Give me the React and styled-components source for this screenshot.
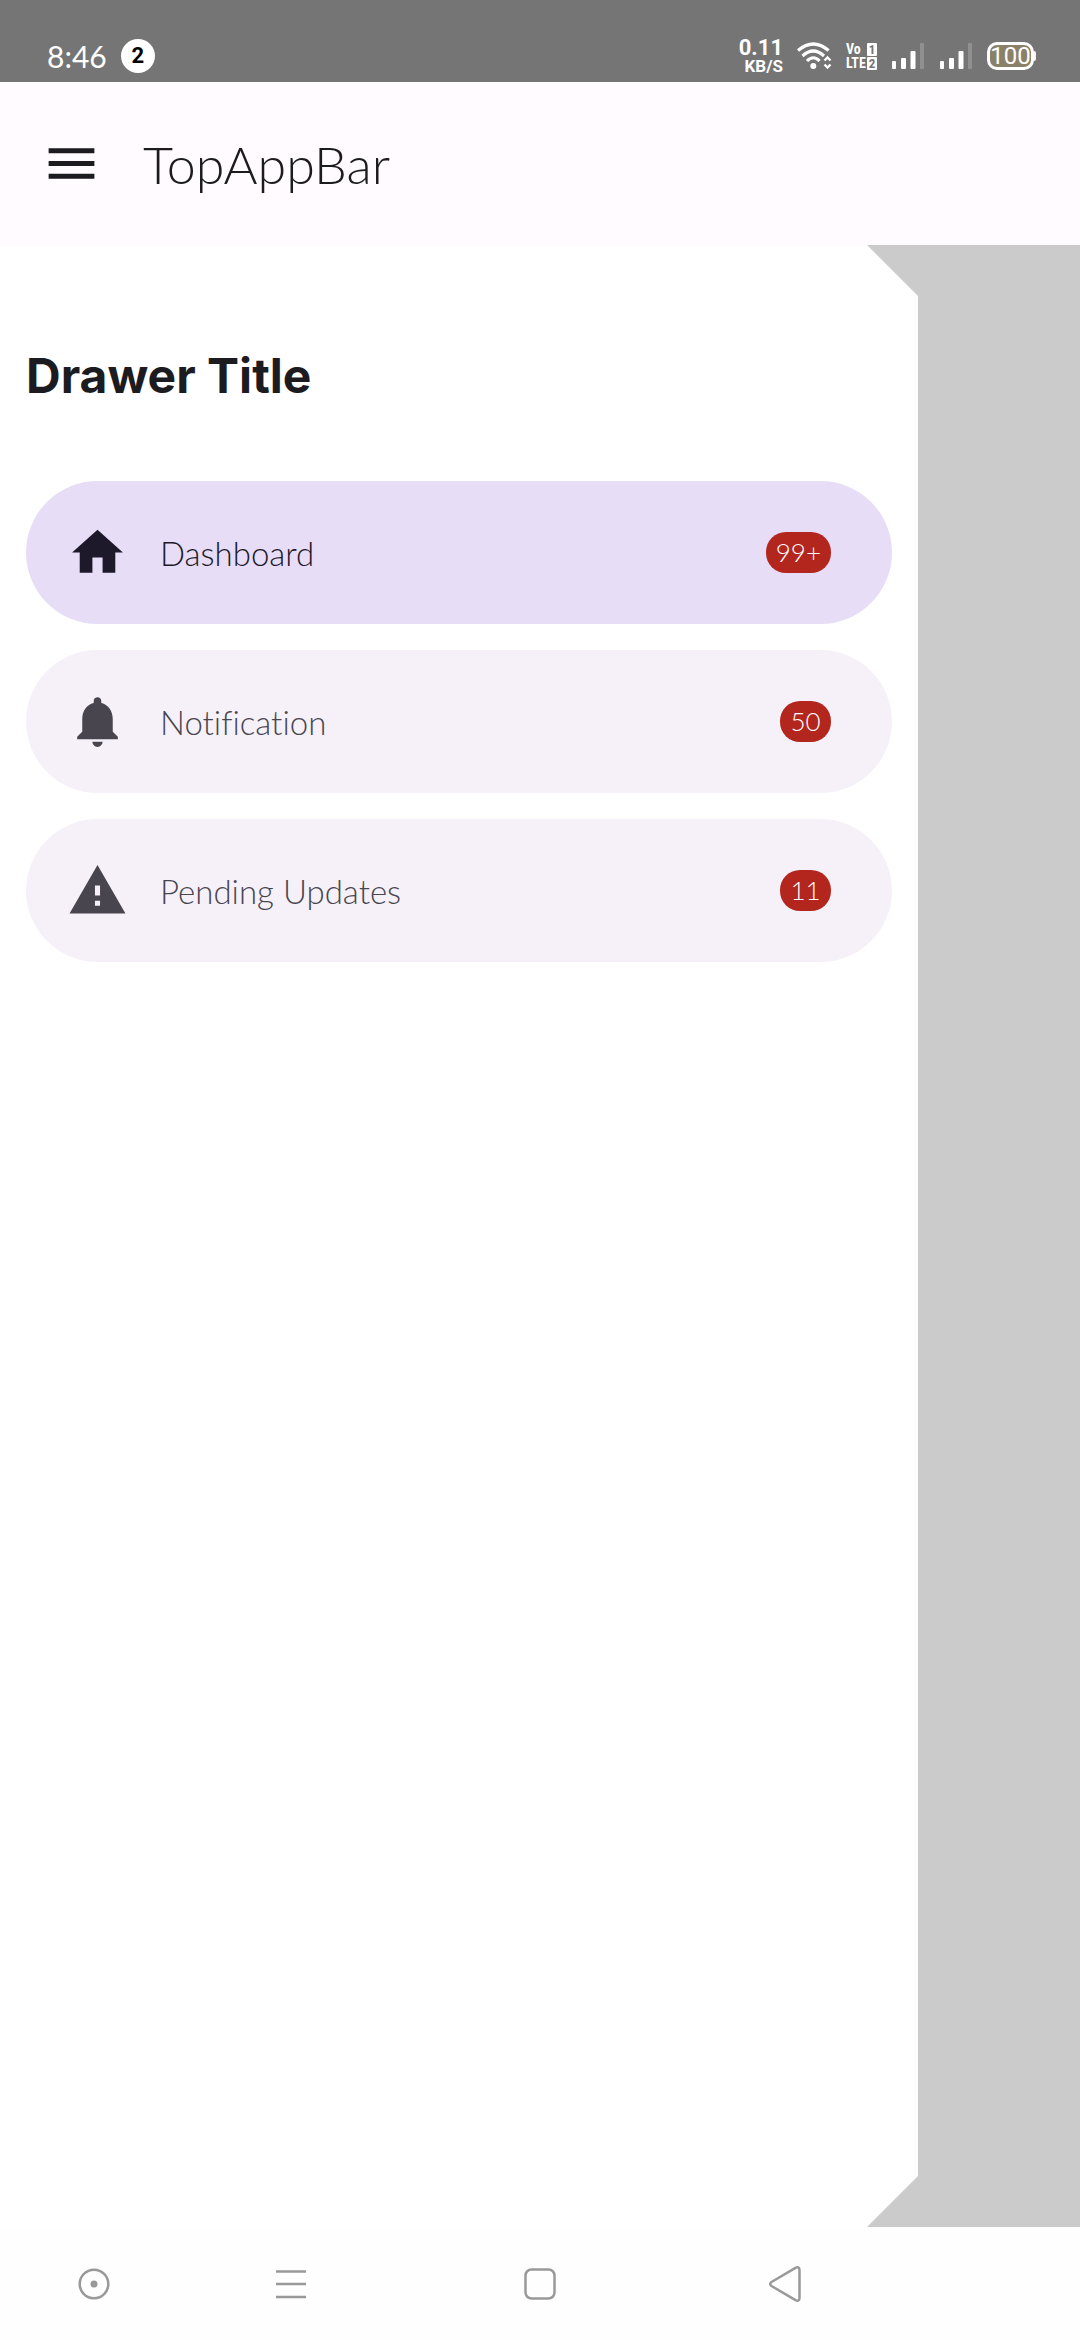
import React, { useState } from "react";
import styled, { createGlobalStyle } from "styled-components";

const GlobalStyle = createGlobalStyle`
  * { box-sizing: border-box; }
  body { margin: 0; background: #fefefe; }
  button { border: 0; padding: 0; background: none; font: inherit; color: inherit; cursor: pointer; }
`;

const Screen = styled.div`
  min-height: 100vh;
  display: flex;
  flex-direction: column;
  font-family: Lato, "Open Sans", sans-serif;
  font-weight: 300;
  font-variant-ligatures: none;
  color: #1c1b1f;
`;

const StatusBar = styled.header`
  display: flex;
  align-items: center;
  justify-content: space-between;
  height: 82px;
  padding: 30px 44px 0 47px;
  background: #757575;
  color: #fff;
`;

const StatusGroup = styled.div`
  display: flex;
  align-items: center;
  gap: 14px;
`;

const Clock = styled.time`
  font-size: 30px;
  line-height: 34px;
  font-weight: 400;
`;

const Count = styled.span`
  width: 34px;
  height: 34px;
  border-radius: 50%;
  background: #fff;
  color: #000;
  font: 700 22px/34px Roboto, sans-serif;
  text-align: center;
`;

const Speed = styled.div`
  display: flex;
  flex-direction: column;
  align-items: flex-end;
  font-family: Roboto, sans-serif;
  font-weight: 700;
`;

const SpeedValue = styled.span`
  font-size: 22px;
  line-height: 20px;
`;

const SpeedUnit = styled.span`
  font-size: 17px;
  line-height: 17px;
`;

const Volte = styled.div`
  display: grid;
  grid-template-columns: 21px 10px;
  grid-auto-rows: 14px;
  align-items: center;
  font: 700 14px/14px "Liberation Sans Narrow", "Roboto Condensed", "Liberation Sans", sans-serif;
`;

const Sim = styled.span`
  height: 13px;
  border-radius: 1px;
  background: #fff;
  color: #757575;
  font-size: 13px;
  line-height: 13px;
  text-align: center;
`;

const Battery = styled.div`
  display: flex;
  align-items: center;
`;

const BatteryBody = styled.span`
  width: 47px;
  height: 28px;
  border: 3px solid #fff;
  border-radius: 10px;
  background: #8b8168;
  color: #fff;
  font: 400 24px/22px Roboto, sans-serif;
  display: flex;
  justify-content: center;
`;

const BatteryTip = styled.span`
  width: 2px;
  height: 10px;
  border-radius: 0 2px 2px 0;
  background: #fff;
`;

const AppBar = styled.div`
  display: flex;
  align-items: center;
  gap: 41px;
  height: 163px;
  padding: 0 41px;
  background: #fffbff;
`;

const IconButton = styled.button`
  display: flex;
`;

const BarTitle = styled.h1`
  margin: 0;
  font-size: 52px;
  line-height: 64px;
  font-weight: 300;
`;

const Scrim = styled.main`
  flex: 1;
  display: flex;
  background: #cbcbcb;
`;

const Drawer = styled.aside`
  width: 85%;
  padding: 103px 26px 26px;
  background: #fff;
  clip-path: polygon(
    0 0,
    calc(100% - 51px) 0,
    100% 51px,
    100% calc(100% - 51px),
    calc(100% - 51px) 100%,
    0 100%
  );
`;

const DrawerTitle = styled.h2`
  margin: 0 0 77px;
  font: 700 48px/56px Inter, sans-serif;
`;

const Menu = styled.nav`
  display: flex;
  flex-direction: column;
  gap: 26px;
`;

const MenuItem = styled.button`
  display: flex;
  align-items: center;
  gap: 32px;
  width: 100%;
  height: 143px;
  padding: 0 61px 0 41px;
  border-radius: 72px;
  background: ${(p) => (p.$selected ? "#e7ddf6" : "#f6f1f9")};
  color: ${(p) => (p.$selected ? "#1d192b" : "#49454f")};
`;

const MenuLabel = styled.span`
  flex: 1;
  font-size: 33px;
  line-height: 44px;
  text-align: left;
`;

const Badge = styled.span`
  min-width: 51px;
  height: 41px;
  padding: 0 10px;
  border-radius: 20px;
  background: #b3261e;
  color: #fff;
  font-size: 26px;
  line-height: 41px;
  text-align: center;
`;

const SystemNav = styled.footer`
  display: grid;
  grid-template-columns: 187fr 208fr 290fr 200fr 195fr;
  height: 113px;
  background: #fefefe;
`;

const NavButton = styled.button`
  display: flex;
  align-items: center;
  justify-content: center;
  color: #999;
`;

const Material = ({ d }) => (
  <svg width="61" height="61" viewBox="0 0 24 24" fill="currentColor" aria-hidden="true">
    <path d={d} />
  </svg>
);

const icons = {
  menu: "M3 18h18v-2H3v2zm0-5h18v-2H3v2zm0-7v2h18V6H3z",
  home: "M10 20v-6h4v6h5v-8h3L12 3 2 12h3v8z",
  bell: "M12 22c1.1 0 2-.9 2-2h-4c0 1.1.89 2 2 2zm6-6v-5c0-3.07-1.64-5.64-4.5-6.32V4c0-.83-.67-1.5-1.5-1.5s-1.5.67-1.5 1.5v.68C7.63 5.36 6 7.92 6 11v5l-2 2v1h16v-1l-2-2z",
  warning: "M1 21h22L12 2 1 21zm12-3h-2v-2h2v2zm0-4h-2v-4h2v4z",
};

const Wifi = () => (
  <svg width="35" height="28" viewBox="0 0 35 28" fill="none" stroke="#fff" strokeWidth="3.2" aria-hidden="true">
    <path d="M1 8.500Q16.300-4.500 31.600 8.500M5.500 14Q16.300 4 27 14M10 19Q16.300 12.500 22.600 19" />
    <circle cx="16.300" cy="24" r="3" fill="#fff" stroke="none" />
    <path d="M27.500 18.500l3-3 3 3M27.500 22.500l3 3 3-3" strokeWidth="2.400" />
  </svg>
);

const Signal = () => (
  <svg width="34" height="28" viewBox="0 0 34 28" fill="#fff" aria-hidden="true">
    <rect x="1" y="19" width="4" height="8" rx="1" />
    <rect x="10" y="16" width="5" height="11" rx="1" />
    <rect x="19.500" y="9" width="5" height="18" rx="1" />
    <rect x="29" y="1" width="4" height="26" rx="1" opacity=".2" />
  </svg>
);

const navIcons = [
  {
    label: "Assistant",
    art: (
      <>
        <circle cx="18" cy="18" r="14.300" />
        <circle cx="18" cy="18" r="3.500" fill="currentColor" stroke="none" />
      </>
    ),
  },
  { label: "Recent apps", art: <path d="M3 5.500h30M3 18h30M3 31h30" /> },
  { label: "Home", art: <rect x="3.500" y="3.500" width="29" height="29" rx="6" /> },
  { label: "Back", art: <path d="M28.500 1.800Q32.500.200 32.500 4V32Q32.500 35.800 28.500 34.200L4.500 20Q1.800 18 4.500 16Z" strokeLinejoin="round" /> },
];

const items = [
  { label: "Dashboard", icon: "home", badge: "99+" },
  { label: "Notification", icon: "bell", badge: "50" },
  { label: "Pending Updates", icon: "warning", badge: "11" },
];

export default function App() {
  const [open, setOpen] = useState(true);
  const [selected, setSelected] = useState("Dashboard");

  return (
    <Screen>
      <GlobalStyle />
      <StatusBar>
        <StatusGroup>
          <Clock>8:46</Clock>
          <Count>2</Count>
        </StatusGroup>
        <StatusGroup>
          <Speed>
            <SpeedValue>0.11</SpeedValue>
            <SpeedUnit>KB/S</SpeedUnit>
          </Speed>
          <Wifi />
          <Volte>
            <span>Vo</span>
            <Sim>1</Sim>
            <span>LTE</span>
            <Sim>2</Sim>
          </Volte>
          <Signal />
          <Signal />
          <Battery>
            <BatteryBody>100</BatteryBody>
            <BatteryTip />
          </Battery>
        </StatusGroup>
      </StatusBar>
      <AppBar>
        <IconButton aria-label="Toggle drawer" onClick={() => setOpen(!open)}>
          <Material d={icons.menu} />
        </IconButton>
        <BarTitle>TopAppBar</BarTitle>
      </AppBar>
      <Scrim>
        {open && (
          <Drawer>
            <DrawerTitle>Drawer Title</DrawerTitle>
            <Menu>
              {items.map((item) => (
                <MenuItem
                  key={item.label}
                  $selected={item.label === selected}
                  onClick={() => setSelected(item.label)}
                >
                  <Material d={icons[item.icon]} />
                  <MenuLabel>{item.label}</MenuLabel>
                  <Badge>{item.badge}</Badge>
                </MenuItem>
              ))}
            </Menu>
          </Drawer>
        )}
      </Scrim>
      <SystemNav>
        {navIcons.map((n) => (
          <NavButton key={n.label} aria-label={n.label}>
            <svg width="36" height="36" viewBox="0 0 36 36" fill="none" stroke="currentColor" strokeWidth="2.500">
              {n.art}
            </svg>
          </NavButton>
        ))}
      </SystemNav>
    </Screen>
  );
}
